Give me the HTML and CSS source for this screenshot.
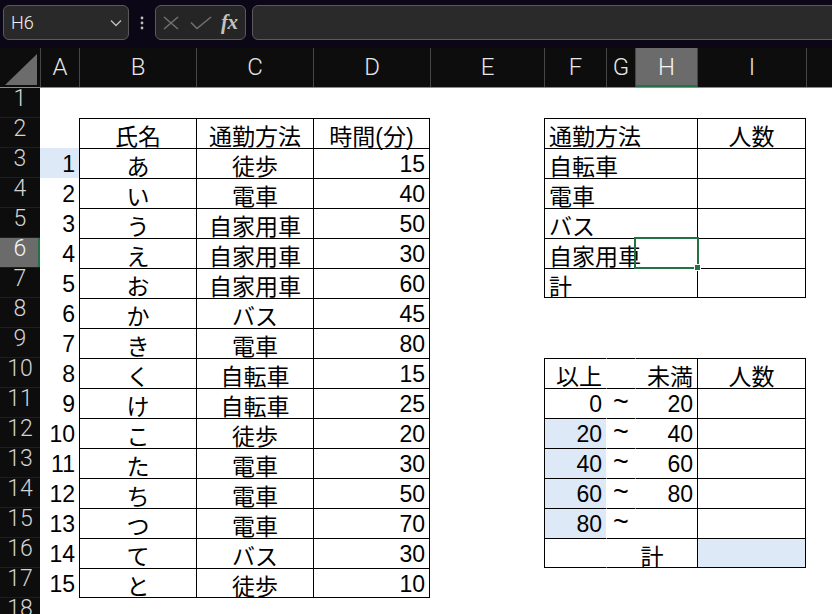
FILE: index.html
```html
<!DOCTYPE html>
<html lang="ja">
<head>
<meta charset="utf-8">
<title>通勤時間の集計</title>
<link rel="stylesheet" href="styles.css">
</head>
<body>
<header class="formula-bar">
  <div class="name-box">
    <span class="name-text">H6</span>
    <svg class="chev" width="12" height="8" viewBox="0 0 12 8"><polyline points="1,1.5 6,6.5 11,1.5"/></svg>
  </div>
  <div class="grip">
    <svg width="4" height="14" viewBox="0 0 4 14"><circle cx="2" cy="2" r="1.4"/><circle cx="2" cy="7" r="1.4"/><circle cx="2" cy="12" r="1.4"/></svg>
  </div>
  <div class="fx-box">
    <svg class="ico ico-x" width="16" height="14" viewBox="0 0 16 14"><path d="M1 1 L15 13 M15 1 L1 13"/></svg>
    <svg class="ico ico-ok" width="22" height="14" viewBox="0 0 22 14"><path d="M1 6.5 L7 12.5 L21 1"/></svg>
    <span class="fx">fx</span>
  </div>
  <div class="formula-input"></div>
</header>

<main class="sheet">
  <div class="row hdr">
    <div class="corner"><div class="tri"></div></div>
    <div class="ch">A</div>
    <div class="ch">B</div>
    <div class="ch">C</div>
    <div class="ch">D</div>
    <div class="ch">E</div>
    <div class="ch">F</div>
    <div class="ch">G</div>
    <div class="ch on">H</div>
    <div class="ch">I</div>
    <div class="ch"></div>
  </div>

  <div class="row"><div class="rh">1</div></div>

  <div class="row">
    <div class="rh">2</div>
    <div class="c"></div>
    <div class="c t ctr jp">氏名</div>
    <div class="c t ctr jp">通勤方法</div>
    <div class="c t er ctr jp">時間(分)</div>
    <div class="c"></div>
    <div class="c t s3 jp">通勤方法</div>
    <div class="c t er ctr jp">人数</div>
  </div>

  <div class="row">
    <div class="rh">3</div>
    <div class="c r fill">1</div>
    <div class="c t ctr jp">あ</div>
    <div class="c t ctr jp">徒歩</div>
    <div class="c t er r">15</div>
    <div class="c"></div>
    <div class="c t s3 jp">自転車</div>
    <div class="c t er"></div>
  </div>

  <div class="row">
    <div class="rh">4</div>
    <div class="c r">2</div>
    <div class="c t ctr jp">い</div>
    <div class="c t ctr jp">電車</div>
    <div class="c t er r">40</div>
    <div class="c"></div>
    <div class="c t s3 jp">電車</div>
    <div class="c t er"></div>
  </div>

  <div class="row">
    <div class="rh">5</div>
    <div class="c r">3</div>
    <div class="c t ctr jp">う</div>
    <div class="c t ctr jp">自家用車</div>
    <div class="c t er r">50</div>
    <div class="c"></div>
    <div class="c t s3 jp">バス</div>
    <div class="c t er"></div>
  </div>

  <div class="row">
    <div class="rh on">6</div>
    <div class="c r">4</div>
    <div class="c t ctr jp">え</div>
    <div class="c t ctr jp">自家用車</div>
    <div class="c t er r">30</div>
    <div class="c"></div>
    <div class="c t s3 jp">自家用車</div>
    <div class="c t er"></div>
  </div>

  <div class="row">
    <div class="rh">7</div>
    <div class="c r">5</div>
    <div class="c t ctr jp">お</div>
    <div class="c t ctr jp">自家用車</div>
    <div class="c t er r">60</div>
    <div class="c"></div>
    <div class="c t eb s3 jp">計</div>
    <div class="c t er eb"></div>
  </div>

  <div class="row">
    <div class="rh">8</div>
    <div class="c r">6</div>
    <div class="c t ctr jp">か</div>
    <div class="c t ctr jp">バス</div>
    <div class="c t er r">45</div>
  </div>

  <div class="row">
    <div class="rh">9</div>
    <div class="c r">7</div>
    <div class="c t ctr jp">き</div>
    <div class="c t ctr jp">電車</div>
    <div class="c t er r">80</div>
  </div>

  <div class="row">
    <div class="rh">10</div>
    <div class="c r">8</div>
    <div class="c t ctr jp">く</div>
    <div class="c t ctr jp">自転車</div>
    <div class="c t er r">15</div>
    <div class="c"></div>
    <div class="c t r jp">以上</div>
    <div class="c tt"></div>
    <div class="c tt r jp">未満</div>
    <div class="c t er ctr jp">人数</div>
  </div>

  <div class="row">
    <div class="rh">11</div>
    <div class="c r">9</div>
    <div class="c t ctr jp">け</div>
    <div class="c t ctr jp">自転車</div>
    <div class="c t er r">25</div>
    <div class="c"></div>
    <div class="c t r">0</div>
    <div class="c tt ctr tilde">~</div>
    <div class="c tt r">20</div>
    <div class="c t er"></div>
  </div>

  <div class="row">
    <div class="rh">12</div>
    <div class="c r">10</div>
    <div class="c t ctr jp">こ</div>
    <div class="c t ctr jp">徒歩</div>
    <div class="c t er r">20</div>
    <div class="c"></div>
    <div class="c t r fill">20</div>
    <div class="c tt ctr tilde">~</div>
    <div class="c tt r">40</div>
    <div class="c t er"></div>
  </div>

  <div class="row">
    <div class="rh">13</div>
    <div class="c r">11</div>
    <div class="c t ctr jp">た</div>
    <div class="c t ctr jp">電車</div>
    <div class="c t er r">30</div>
    <div class="c"></div>
    <div class="c t r fill">40</div>
    <div class="c tt ctr tilde">~</div>
    <div class="c tt r">60</div>
    <div class="c t er"></div>
  </div>

  <div class="row">
    <div class="rh">14</div>
    <div class="c r">12</div>
    <div class="c t ctr jp">ち</div>
    <div class="c t ctr jp">電車</div>
    <div class="c t er r">50</div>
    <div class="c"></div>
    <div class="c t r fill">60</div>
    <div class="c tt ctr tilde">~</div>
    <div class="c tt r">80</div>
    <div class="c t er"></div>
  </div>

  <div class="row">
    <div class="rh">15</div>
    <div class="c r">13</div>
    <div class="c t ctr jp">つ</div>
    <div class="c t ctr jp">電車</div>
    <div class="c t er r">70</div>
    <div class="c"></div>
    <div class="c t r fill">80</div>
    <div class="c tt ctr tilde">~</div>
    <div class="c tt r"></div>
    <div class="c t er"></div>
  </div>

  <div class="row">
    <div class="rh">16</div>
    <div class="c r">14</div>
    <div class="c t ctr jp">て</div>
    <div class="c t ctr jp">バス</div>
    <div class="c t er r">30</div>
    <div class="c"></div>
    <div class="c t eb"></div>
    <div class="c tt eb s2 ctr jp">計</div>
    <div class="c t er eb fill"></div>
  </div>

  <div class="row">
    <div class="rh">17</div>
    <div class="c r">15</div>
    <div class="c t eb ctr jp">と</div>
    <div class="c t eb ctr jp">徒歩</div>
    <div class="c t er eb r">10</div>
  </div>

  <div class="row"><div class="rh">18</div></div>

  <div class="selection"><div class="handle"></div></div>
</main>
</body>
</html>
```

FILE: styles.css
```css
* {
  box-sizing: border-box;
}

html,
body {
  margin: 0;
  padding: 0;
}

body {
  width: 832px;
  height: 614px;
  overflow: hidden;
  background: #0b0716;
  font-family: "Liberation Sans", "Noto Sans CJK JP", sans-serif;
}

/* ---------- formula bar ---------- */
.formula-bar {
  display: flex;
  height: 48px;
  padding: 5px 0 8px 3px;
}

.name-box {
  width: 126px;
  height: 35px;
  border: 1px solid #5a5a5a;
  border-radius: 6px;
  background: #292929;
  display: flex;
  align-items: center;
  justify-content: space-between;
  padding: 0 6px 0 7px;
}

.name-text {
  font: 300 18px Roboto, sans-serif;
  color: #f2f2f2;
}

.chev {
  fill: none;
  stroke: #bdbdbd;
  stroke-width: 1.4;
}

.grip {
  width: 26px;
  display: flex;
  align-items: center;
  justify-content: center;
}

.grip svg {
  fill: #bdbdbd;
}

.fx-box {
  width: 91px;
  height: 35px;
  border: 1px solid #5a5a5a;
  border-radius: 6px;
  background: #252525;
  display: flex;
  align-items: center;
  padding-left: 7px;
}

.ico {
  fill: none;
  stroke: #707070;
  stroke-width: 1.6;
}

.ico-ok {
  margin-left: 11px;
}

.fx {
  margin-left: 9px;
  font: italic bold 21px "Liberation Serif", serif;
  color: #c2c2c2;
  letter-spacing: -0.5px;
}

.formula-input {
  flex: 1;
  height: 35px;
  margin-left: 6px;
  margin-right: -12px;
  border: 1px solid #5a5a5a;
  border-radius: 6px;
  background: #2a2a2a;
}

/* ---------- grid ---------- */
.sheet {
  position: relative;
  background: #fff;
}

.row {
  display: grid;
  grid-template-columns: 40px 39px 117px 117px 117px 114px 62px 29px 62px 109px 1fr;
  height: 30px;
}

.hdr {
  height: 40px;
  background: #0d0d0d;
  border-bottom: 1px solid #8c8c8c;
}

.corner {
  display: flex;
  justify-content: flex-end;
  align-items: flex-end;
  padding: 0 3px 2px 0;
}

.tri {
  width: 32px;
  height: 31px;
  background: #6c6c6c;
  clip-path: polygon(100% 0, 100% 100%, 0 100%);
}

.ch {
  border-left: 1px solid #464646;
  color: #e6e6e6;
  font: 300 24px/39px Roboto, sans-serif;
  text-align: center;
}

.ch.on {
  background: #6b6b6b;
  color: #f6f6f6;
  box-shadow: inset 0 -2px #217346;
}

.rh {
  height: 30px;
  background: #0d0d0d;
  border-bottom: 1px solid #1f1f1f;
  color: #d4d4d4;
  font: 300 23px/22px Roboto, sans-serif;
  text-align: center;
}

.rh.on {
  background: #6b6b6b;
  color: #f4f4f4;
  box-shadow: inset -2px 0 #217346;
}

/* cells */
.c {
  height: 30px;
  padding: 0 4px;
  border-top: 1px solid transparent;
  border-left: 1px solid transparent;
  color: #000;
  font-size: 23px;
  line-height: 30px;
  white-space: nowrap;
}

.t {
  border-top-color: #000;
  border-left-color: #000;
}

.tt {
  border-top-color: #000;
}

.er {
  border-right: 1px solid #000;
}

.eb {
  border-bottom: 1px solid #000;
}

.r {
  text-align: right;
}

.ctr {
  text-align: center;
}

.jp {
  padding-top: 3px;
}

.tilde {
  font-size: 27px;
  line-height: 26px;
}

.s2 {
  grid-column: span 2;
}

.s3 {
  grid-column: span 3;
}

.fill {
  background: #dde9f6;
}

/* active cell frame */
.selection {
  position: absolute;
  left: 634px;
  top: 189px;
  width: 65px;
  height: 32px;
  border: 2px solid #217346;
  pointer-events: none;
}

.handle {
  position: absolute;
  right: -4px;
  bottom: -4px;
  width: 7px;
  height: 7px;
  background: #217346;
  border: 1px solid #fff;
}
```
